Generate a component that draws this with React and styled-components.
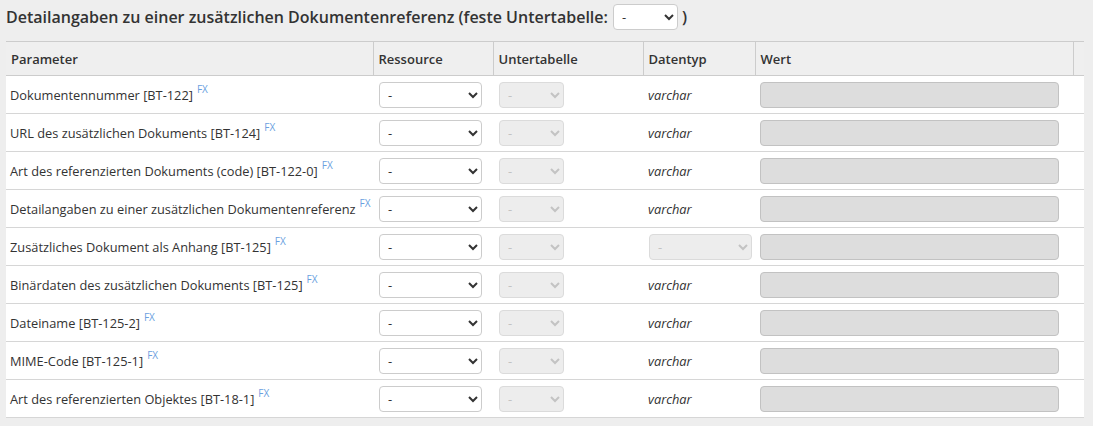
import React from 'react';
import styled, { createGlobalStyle } from 'styled-components';

const GlobalStyle = createGlobalStyle`
  html, body {
    margin: 0;
    padding: 0;
    background: #eeeeee;
    font-family: 'Open Sans', 'Liberation Sans', sans-serif;
    color: #333;
  }
`;

const Page = styled.div`
  padding: 4px 9px 0 6px;
`;

const Title = styled.h3`
  margin: 0 0 11px 0;
  font-size: 16px;
  font-weight: 600;
  color: #333;
  display: flex;
  align-items: center;
  gap: 4px;
  height: 26px;
`;

const Select = styled.select`
  box-sizing: border-box;
  height: 26px;
  width: ${p => p.$w || 103}px;
  font-family: 'Open Sans', 'Liberation Sans', sans-serif;
  font-size: 13px;
  color: ${p => (p.disabled ? '#aaa' : '#333')};
  background: ${p => (p.disabled ? '#e6e6e6' : '#fff')};
  border: 1px solid #ccc;
  border-radius: 4px;
  padding: 0 4px;
  margin: 0 0 0 1px;
`;

const Table = styled.table`
  width: 1078px;
  border-collapse: collapse;
  table-layout: fixed;
  font-size: 12.8px;
`;

const Col = styled.col`
  width: ${p => p.$w}px;
`;

const HeadCell = styled.th`
  box-sizing: border-box;
  height: 34px;
  padding: 0 5px;
  text-align: left;
  font-weight: 600;
  font-size: 13px;
  background: #efefef;
  border-top: 1px solid #ccc;
  border-bottom: 1px solid #ccc;
  border-left: ${p => (p.$first ? 'none' : '1px solid #ccc')};
  overflow: hidden;
`;

const Row = styled.tr`
  background: #fff;
  border-bottom: 1px solid #d6d6d6;
`;

const Cell = styled.td`
  box-sizing: border-box;
  height: 38px;
  padding: 0 ${p => (p.$pl ? p.$pl : 5)}px;
  vertical-align: middle;
  font-style: ${p => (p.$italic ? 'italic' : 'normal')};
  white-space: nowrap;
`;

const Fx = styled.span`
  font-size: 10px;
  color: #6b9fe0;
  margin-left: 4px;
  position: relative;
  top: -7px;
`;

const ValueBox = styled.div`
  box-sizing: border-box;
  width: 299px;
  height: 26px;
  background: #dddddd;
  border: 1px solid #c2c2c2;
  border-radius: 4px;
`;

const rows = [
  { name: 'Dokumentennummer [BT-122]' },
  { name: 'URL des zusätzlichen Dokuments [BT-124]' },
  { name: 'Art des referenzierten Dokuments (code) [BT-122-0]' },
  { name: 'Detailangaben zu einer zusätzlichen Dokumentenreferenz' },
  { name: 'Zusätzliches Dokument als Anhang [BT-125]', sub: true },
  { name: 'Binärdaten des zusätzlichen Dokuments [BT-125]' },
  { name: 'Dateiname [BT-125-2]' },
  { name: 'MIME-Code [BT-125-1]' },
  { name: 'Art des referenzierten Objektes [BT-18-1]' }
];

const App = () => {
  return (
    <Page>
      <GlobalStyle />
      <Title>
        Detailangaben zu einer zusätzlichen Dokumentenreferenz (feste Untertabelle:
        <Select $w={65} defaultValue='-'>
          <option>-</option>
        </Select>
        )
      </Title>
      <Table>
        <colgroup>
          <Col $w={367} />
          <Col $w={120} />
          <Col $w={150} />
          <Col $w={112} />
          <Col $w={318} />
          <Col $w={11} />
        </colgroup>
        <thead>
          <tr>
            <HeadCell $first>Parameter</HeadCell>
            <HeadCell>Ressource</HeadCell>
            <HeadCell>Untertabelle</HeadCell>
            <HeadCell>Datentyp</HeadCell>
            <HeadCell>Wert</HeadCell>
            <HeadCell />
          </tr>
        </thead>
        <tbody>
          {rows.map(r => (
            <Row key={r.name}>
              <Cell $pl={4}>
                {r.name}
                <Fx>FX</Fx>
              </Cell>
              <Cell>
                <Select defaultValue='-'>
                  <option>-</option>
                </Select>
              </Cell>
              <Cell>
                <Select $w={65} disabled defaultValue='-'>
                  <option>-</option>
                </Select>
              </Cell>
              <Cell $italic>
                {r.sub ? (
                  <Select disabled defaultValue='-'>
                    <option>-</option>
                  </Select>
                ) : (
                  'varchar'
                )}
              </Cell>
              <Cell>
                <ValueBox />
              </Cell>
              <Cell />
            </Row>
          ))}
        </tbody>
      </Table>
    </Page>
  );
};

export default App;
